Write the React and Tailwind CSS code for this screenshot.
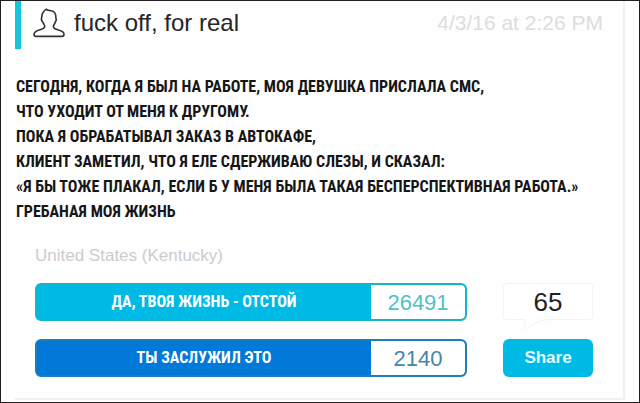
import React from 'react';

const story = [
  'СЕГОДНЯ, КОГДА Я БЫЛ НА РАБОТЕ, МОЯ ДЕВУШКА ПРИСЛАЛА СМС,',
  'ЧТО УХОДИТ ОТ МЕНЯ К ДРУГОМУ.',
  'ПОКА Я ОБРАБАТЫВАЛ ЗАКАЗ В АВТОКАФЕ,',
  'КЛИЕНТ ЗАМЕТИЛ, ЧТО Я ЕЛЕ СДЕРЖИВАЮ СЛЕЗЫ, И СКАЗАЛ:',
  '«Я БЫ ТОЖЕ ПЛАКАЛ, ЕСЛИ Б У МЕНЯ БЫЛА ТАКАЯ БЕСПЕРСПЕКТИВНАЯ РАБОТА.»',
  'ГРЕБАНАЯ МОЯ ЖИЗНЬ',
];

const UserIcon = () => (
  <svg viewBox="0 0 32 30" className="w-8 h-[30px] shrink-0" fill="none" stroke="#333333" strokeWidth="1.6" strokeLinejoin="round" aria-hidden="true">
    <path d="M13.4 1.2 C14.4 2.4 16 2.5 18.6 2.8 C21.8 3.6 23 6.6 22.9 10 C24 11.6 22.8 13.2 22.2 14.4 C21.6 16 20.4 17 20.4 18.8 C20.6 20.8 22.8 21.2 25.6 22 C29.6 23 31 24.2 31 26.6 C31 28 30.4 28.4 29 28.4 H3 C1.6 28.4 1 27.8 1 26.4 C1 24 3.4 22.8 7 21.8 C9.8 21 11.6 20.6 11.7 18.8 C11.8 17 10.6 16 10 14.4 C9 13.2 7.8 11.6 8.6 10 C8.6 6 10.4 3.2 13.4 1.2 Z" />
  </svg>
);

const VoteButton = ({ label, count, className, countClassName }) => (
  <button className={`w-full h-[38px] flex items-stretch rounded-md border-2 overflow-hidden ${className}`}>
    <span className="flex-1 flex items-center justify-center font-['Roboto_Condensed','Liberation_Sans_Narrow','Roboto',sans-serif] font-bold text-[16px] text-white">{label}</span>
    <span className={`w-[94px] flex items-center justify-center bg-white rounded-r text-[22px] ${countClassName}`}>{count}</span>
  </button>
);

const CommentsButton = ({ count }) => (
  <button className="relative h-[37px] rounded border border-[#f1f3f4] bg-white text-[26px] leading-none text-[#222222]">
    {count}
    <svg viewBox="0 0 28 11" className="absolute left-5 top-full w-7 h-[11px]" fill="#ffffff" stroke="#f1f3f4" aria-hidden="true">
      <path d="M1 0 V10 C8 6 14 1 27 0.5" />
    </svg>
  </button>
);

const App = () => (
  <div className="min-h-screen flex flex-col border border-[#231f20] bg-white px-[14px] pb-[2px] font-['Liberation_Sans',Arial,sans-serif]">
    <article className="flex-1 border-r-2 border-b-2 border-[#edf1f1] bg-[#fefefe]">
      <header className="h-12 flex items-center border-l-6 border-[#14c5de] pl-3 pr-5 pb-1">
        <UserIcon />
        <h1 className="ml-[9px] text-[24px] leading-7 text-[#262626]">fuck off, for real</h1>
        <time className="ml-auto text-[21px] leading-7 text-[#dddddd]">4/3/16 at 2:26 PM</time>
      </header>

      <div className="pl-px pt-[25px] font-['Roboto_Condensed','Liberation_Sans_Narrow','Roboto',sans-serif] font-bold text-[16px] leading-[25px] text-[#161616] whitespace-nowrap">
        {story.map((line) => (
          <p key={line}>{line}</p>
        ))}
      </div>

      <div className="pl-5 pr-[30px]">
        <p className="mt-5 text-[17px] leading-6 text-[#cccccc]">United States (Kentucky)</p>
        <div className="mt-[15px] mb-5 grid grid-cols-[1fr_90px] gap-x-9 gap-y-[18px]">
          <VoteButton label="ДА, ТВОЯ ЖИЗНЬ - ОТСТОЙ" count="26491" className="bg-[#00bae6] border-[#16b4cd]" countClassName="text-[#4fbfc9]" />
          <CommentsButton count="65" />
          <VoteButton label="ТЫ ЗАСЛУЖИЛ ЭТО" count="2140" className="bg-[#0079d8] border-[#1c7fb8]" countClassName="text-[#4387ad]" />
          <button className="h-[38px] rounded-md bg-[#00bae6] text-[17px] font-bold text-[#e8fbff]">Share</button>
        </div>
      </div>
    </article>
  </div>
);

export default App;
